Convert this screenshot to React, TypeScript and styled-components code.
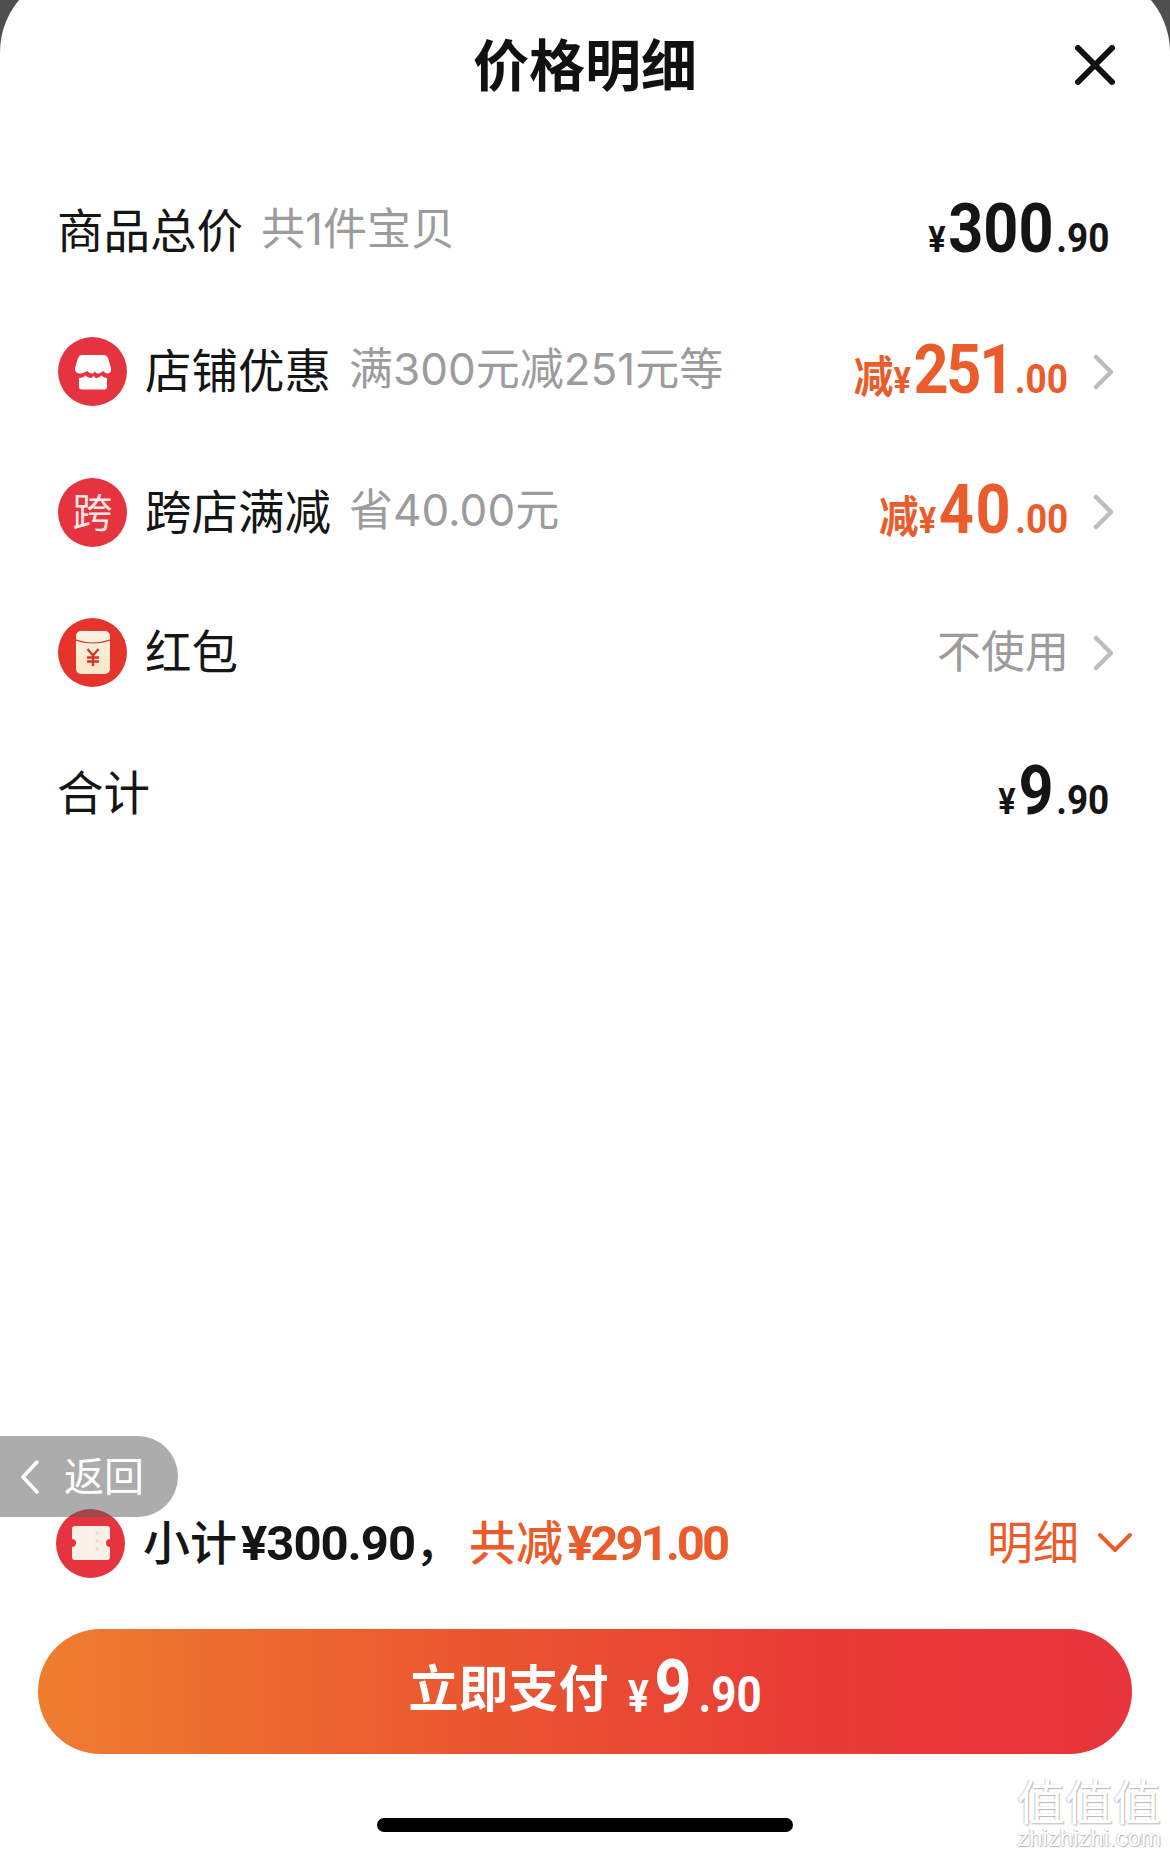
import React from "react";
import styled, { createGlobalStyle } from "styled-components";

const CJK = `"Noto Sans CJK SC", "Noto Sans", sans-serif`;
const LATIN = `Inter, "Noto Sans CJK SC", sans-serif`;
const NUM = `Roboto, "Liberation Sans", sans-serif`;
const ORANGE = "#ea5c2b";

const Global = createGlobalStyle`
  html, body { margin: 0; padding: 0; background: #4f4f4f; overflow: hidden; }
  * { box-sizing: border-box; }
`;

const Sheet = styled.div`
  position: relative;
  width: 1170px;
  height: 1884px;
  margin-top: -28px;
  background: #fff;
  border-radius: 80px 80px 0 0;
  display: flex;
  flex-direction: column;
  font-family: ${CJK};
  color: #111;
  overflow: hidden;
`;

const Header = styled.header`
  position: relative;
  height: 130px;
  margin-top: 28px;
  flex: none;
  display: flex;
  align-items: center;
  justify-content: center;
`;

const Title = styled.h1`
  margin: 0;
  padding-bottom: 6px;
  font-size: 56px;
  line-height: 1;
  font-weight: 700;
  color: #111;
`;

const Close = styled.svg`
  position: absolute;
  right: 55px;
  top: 45px;
  width: 40px;
  height: 40px;
`;

const List = styled.section`
  padding-top: 31px;
  display: flex;
  flex-direction: column;
`;

const Row = styled.div`
  height: 140.5px;
  padding: 0 56px 0 57px;
  display: flex;
  align-items: center;
`;

const Badge = styled.span<{ $bg?: string }>`
  flex: none;
  width: 69px;
  height: 69px;
  margin: 0 18px 0 1px;
  border-radius: 50%;
  background: ${(p) => p.$bg || "#e5333f"};
  display: flex;
  align-items: center;
  justify-content: center;
  color: #fde8e6;
  font-size: 40px;
  line-height: 1;
  padding-bottom: 5px;
`;

const IconBadge = styled(Badge)`
  padding-bottom: 0;
`;

const Label = styled.span`
  font-size: 46.500px;
  line-height: 1;
  padding-bottom: 7px;
  color: #151515;
`;

const Note = styled.span`
  margin-left: 18px;
  padding-bottom: 5px;
  font-family: ${LATIN};
  font-size: 44px;
  line-height: 1;
  color: #9c9c9c;
`;

const Spacer = styled.span`
  flex: 1;
`;

const Amount = styled.span<{ $orange?: boolean; $plain?: boolean }>`
  display: inline-flex;
  align-items: baseline;
  font-family: ${NUM};
  font-weight: 700;
  color: ${(p) => (p.$orange ? ORANGE : "#151515")};
  margin-right: ${(p) => (p.$plain ? "5px" : "1px")};
  transform: translateY(-2.500px) scaleX(0.9);
  transform-origin: right center;
`;

const Cut = styled.span`
  font-family: ${CJK};
  font-size: 44px;
  font-weight: 700;
  line-height: 1;
`;

const Yen = styled.span`
  font-size: 36px;
  margin-right: 3px;
`;

const Big = styled.span<{ $track?: number }>`
  font-size: 68px;
  line-height: 1;
  letter-spacing: ${(p) => p.$track ?? 0}px;
`;

const Small = styled.span`
  font-size: 41px;
  margin-left: 3px;
`;

const Muted = styled.span`
  font-size: 44px;
  line-height: 1;
  padding-bottom: 7px;
  color: #9c9c9c;
`;

const Chevron = styled.svg`
  flex: none;
  width: 22px;
  height: 36px;
  margin-left: 23px;
`;

const Footer = styled.footer`
  margin-top: auto;
  padding: 0 38px 24px;
  display: flex;
  flex-direction: column;
`;

const Summary = styled.div`
  height: 100px;
  margin-bottom: 36px;
  padding-left: 17px;
  display: flex;
  align-items: center;
`;

const SummaryText = styled.span<{ $orange?: boolean }>`
  font-size: 47px;
  line-height: 1;
  font-weight: 500;
  padding-bottom: 2px;
  margin-left: ${(p) => (p.$orange ? "7px" : "0")};
  color: ${(p) => (p.$orange ? ORANGE : "#151515")};
  & b {
    font-family: ${NUM};
    font-weight: 700;
    font-size: 49px;
    margin-left: 4px;
    letter-spacing: ${(p) => (p.$orange ? "-3px" : "-1px")};
  }
`;

const SummaryDetail = styled.span`
  font-size: 46px;
  line-height: 1;
  padding-bottom: 8px;
  color: ${ORANGE};
`;

const DownIcon = styled.svg`
  width: 36px;
  height: 22px;
  margin-left: 18px;
  margin-right: -1px;
`;

const PayButton = styled.button`
  height: 125px;
  border: 0;
  padding: 16px 0 0;
  border-radius: 63px;
  background: linear-gradient(90deg, #ee7d2f 0%, #ea5630 40%, #e93c36 70%, #e8343c 100%);
  color: #fff;
  font-family: ${CJK};
  display: flex;
  align-items: baseline;
  justify-content: center;
`;

const PayLabel = styled.span`
  font-size: 50px;
  line-height: 1;
  font-weight: 700;
`;

const PayAmount = styled.span`
  display: inline-flex;
  align-items: baseline;
  margin: 0 -9px 0 10px;
  font-family: ${NUM};
  font-weight: 700;
  transform: translateY(5px) scaleX(0.88);
`;

const PayYen = styled.span`
  font-size: 44px;
  margin-right: 6px;
`;

const PayBig = styled.span`
  font-size: 74px;
  line-height: 1;
`;

const PaySmall = styled.span`
  font-size: 50px;
  margin-left: 8px;
`;

const HomeBar = styled.div`
  width: 416px;
  height: 14px;
  margin: 64px auto 0;
  border-radius: 7px;
  background: #000;
`;

const BackPill = styled.div`
  position: absolute;
  left: 0;
  top: 1464px;
  width: 178px;
  height: 81px;
  border-radius: 0 41px 41px 0;
  background: rgba(90, 90, 90, 0.5);
  display: flex;
  align-items: center;
  padding-left: 20px;
  color: #fff;
  font-size: 40px;
  line-height: 1;
`;

const BackText = styled.span`
  padding-bottom: 6px;
`;

const BackIcon = styled.svg`
  width: 20px;
  height: 36px;
  margin-right: 24px;
`;

const Watermark = styled.div`
  position: absolute;
  right: 6px;
  bottom: 5px;
  width: 150px;
  display: flex;
  flex-direction: column;
  align-items: center;
  color: #fff;
  text-shadow: 1px 1px 1px #b5b5b5, -1px 0 1px #cfcfcf;
`;

const WatermarkMark = styled.span`
  font-size: 48px;
  line-height: 52px;
  white-space: nowrap;
`;

const WatermarkUrl = styled.span`
  font-family: "Liberation Sans", sans-serif;
  font-size: 24px;
  line-height: 26px;
  white-space: nowrap;
`;

const ChevronRight = () => (
  <Chevron viewBox="0 0 22 36" fill="none">
    <path d="M4 3l15 15L4 33" stroke="#bdbdbd" strokeWidth="4.500" strokeLinecap="round" strokeLinejoin="round" />
  </Chevron>
);

const StoreIcon = () => (
  <svg width="36" height="36" viewBox="0 0 36 36">
    <path
      d="M7 1h22c2 0 3 1 4 3l3 10c.6 3-1 5.500-3.500 5.500-2 0-3-1-4.500-2.500-1.500 1.500-3 2.500-5 2.500s-2.500-1-3-2.500c-.5 1.500-1.500 2.500-3 2.500s-3.500-1-5-2.500C10 18.500 8 19.500 5 19.500 1.500 19.500-.5 17 0 14L3 4c1-2 2-3 4-3z"
      fill="#fff"
    />
    <path
      d="M4 24c3 0 5-1 6.500-2.500C12 23 14 24 15.500 24s2.500-1 3-2.500c.5 1.500 1.500 2.500 3 2.500s3.500-1 5-2.500c1.500 1.500 3 2.500 5.500 2.500v9c0 1.500-1 2.500-2.500 2.500h-23C5 35.500 4 34.500 4 33z"
      fill="#fff"
    />
  </svg>
);

const PacketIcon = () => (
  <svg width="34" height="43" viewBox="0 0 34 43">
    <defs>
      <linearGradient id="packetFill" x1="0" y1="0" x2="0" y2="1">
        <stop offset="0" stopColor="#fdf3e6" />
        <stop offset="1" stopColor="#fce6c4" />
      </linearGradient>
    </defs>
    <rect x="0" y="0" width="34" height="43" rx="5" fill="url(#packetFill)" />
    <path d="M0 9q17 6 34 0" stroke="#d9342b" strokeWidth="1.200" fill="none" />
    <path d="M11.500 18l5.500 6.500L22.500 18M17 24.500V35M11 26.500h12M11 30.500h12" stroke="#d9342b" strokeWidth="2.400" fill="none" />
  </svg>
);

const TicketIcon = () => (
  <svg width="38" height="34" viewBox="0 0 38 34">
    <path
      d="M3 0h32a3 3 0 013 3v10a4 4 0 000 8v10a3 3 0 01-3 3H3a3 3 0 01-3-3V21a4 4 0 000-8V3a3 3 0 013-3z"
      fill="#fbf0e8"
    />
    <path d="M25 5v24" stroke="#efdcd2" strokeWidth="3" strokeDasharray="4 4" />
  </svg>
);

export default function App() {
  return (
    <>
      <Global />
      <Sheet>
        <Header>
          <Title>价格明细</Title>
          <Close viewBox="0 0 40 40" fill="none">
            <path d="M3 3l34 34M37 3L3 37" stroke="#111" strokeWidth="6" strokeLinecap="round" />
          </Close>
        </Header>
        <List>
          <Row>
            <Label>商品总价</Label>
            <Note>共1件宝贝</Note>
            <Spacer />
            <Amount $plain>
              <Yen>¥</Yen>
              <Big>300</Big>
              <Small>.90</Small>
            </Amount>
          </Row>
          <Row>
            <IconBadge>
              <StoreIcon />
            </IconBadge>
            <Label>店铺优惠</Label>
            <Note>满300元减251元等</Note>
            <Spacer />
            <Amount $orange>
              <Cut>减</Cut>
              <Yen>¥</Yen>
              <Big $track={-2.5}>251</Big>
              <Small>.00</Small>
            </Amount>
            <ChevronRight />
          </Row>
          <Row>
            <Badge>跨</Badge>
            <Label>跨店满减</Label>
            <Note>省40.00元</Note>
            <Spacer />
            <Amount $orange>
              <Cut>减</Cut>
              <Yen>¥</Yen>
              <Big $track={2}>40</Big>
              <Small>.00</Small>
            </Amount>
            <ChevronRight />
          </Row>
          <Row>
            <IconBadge $bg="#e4342c">
              <PacketIcon />
            </IconBadge>
            <Label>红包</Label>
            <Spacer />
            <Muted>不使用</Muted>
            <ChevronRight />
          </Row>
          <Row>
            <Label>合计</Label>
            <Spacer />
            <Amount $plain>
              <Yen>¥</Yen>
              <Big>9</Big>
              <Small>.90</Small>
            </Amount>
          </Row>
        </List>
        <Footer>
          <Summary>
            <IconBadge>
              <TicketIcon />
            </IconBadge>
            <SummaryText>
              小计<b>¥300.90</b>，
            </SummaryText>
            <SummaryText $orange>
              共减<b>¥291.00</b>
            </SummaryText>
            <Spacer />
            <SummaryDetail>明细</SummaryDetail>
            <DownIcon viewBox="0 0 36 22" fill="none">
              <path d="M3 3l15 15L33 3" stroke={ORANGE} strokeWidth="4" strokeLinecap="round" strokeLinejoin="round" />
            </DownIcon>
          </Summary>
          <PayButton>
            <PayLabel>立即支付</PayLabel>
            <PayAmount>
              <PayYen>¥</PayYen>
              <PayBig>9</PayBig>
              <PaySmall>.90</PaySmall>
            </PayAmount>
          </PayButton>
          <HomeBar />
        </Footer>
        <BackPill>
          <BackIcon viewBox="0 0 20 36" fill="none">
            <path d="M17 3L3 18l14 15" stroke="#fff" strokeWidth="3.500" strokeLinecap="round" strokeLinejoin="round" />
          </BackIcon>
          <BackText>返回</BackText>
        </BackPill>
        <Watermark>
          <WatermarkMark>值值值</WatermarkMark>
          <WatermarkUrl>zhizhizhi.com</WatermarkUrl>
        </Watermark>
      </Sheet>
    </>
  );
}
